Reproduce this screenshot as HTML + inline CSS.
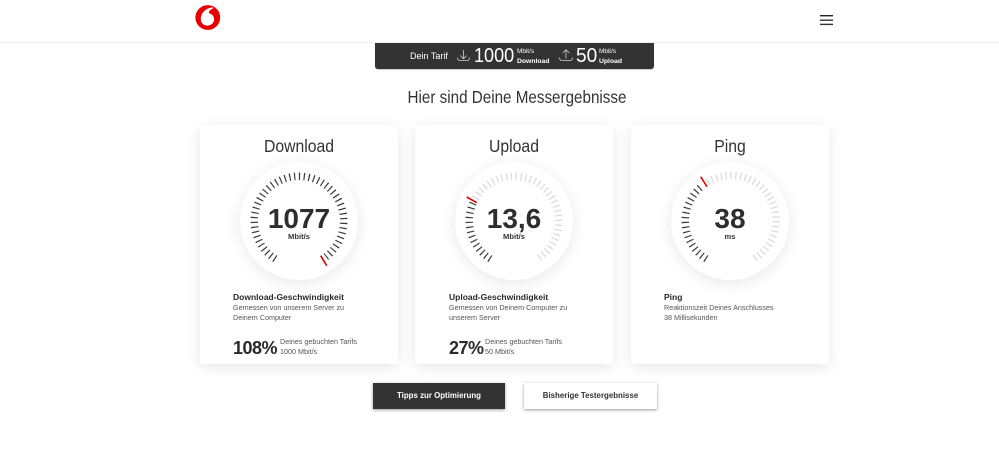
<!DOCTYPE html>
<html lang="de">
<head>
<meta charset="utf-8">
<title>Messergebnisse</title>
<style>
html,body{margin:0;padding:0;background:#fff}
body{width:999px;height:458px;position:relative;overflow:hidden;font-family:"Liberation Sans",Arial,sans-serif;color:#333}
.a{position:absolute;white-space:nowrap}
.hdr{position:absolute;left:0;top:0;width:999px;height:42px;background:#fff;border-bottom:1px solid #f1f1f1}
.bar{position:absolute;left:375px;top:43px;width:279px;height:26px;background:#333;border-radius:0 0 3px 3px;box-shadow:0 1px 1px rgba(0,0,0,.2)}
.bar .a{color:#fff}
.card{position:absolute;top:125px;width:198px;height:239px;background:#fff;border-radius:3px;box-shadow:0 3px 14px rgba(0,0,0,.1)}
.t{position:absolute;left:0;width:100%;top:10px;text-align:center;font-size:17.5px;line-height:22px;color:#333;transform:scaleX(.9)}
.dial{position:absolute;top:37px;left:40px;width:118px;height:118px;border-radius:50%;background:#fff;box-shadow:0 3px 16px rgba(0,0,0,.09)}
.num{position:absolute;left:0;width:100%;top:41px;text-align:center;font-size:28px;line-height:32px;font-weight:bold;color:#2e2e2e}
.unit{position:absolute;left:0;width:100%;top:70px;text-align:center;font-size:7.6px;line-height:9px;font-weight:bold;color:#333}
.h{position:absolute;left:33px;top:167px;font-size:8.5px;line-height:11px;font-weight:bold;color:#2a2a2a;white-space:nowrap}
.d{position:absolute;left:33px;top:178px;font-size:7.2px;line-height:9.5px;color:#555;white-space:nowrap}
.pct{position:absolute;left:33px;top:212px;font-size:18px;line-height:22px;font-weight:bold;color:#2a2a2a;letter-spacing:-.5px}
.pd{position:absolute;top:212px;font-size:7.2px;line-height:10px;color:#555;white-space:nowrap}
.btn{position:absolute;top:383px;height:26px;line-height:26px;text-align:center;font-size:7.9px;font-weight:bold;box-shadow:0 1px 3px rgba(0,0,0,.4)}
svg{position:absolute;left:0;top:0;overflow:visible}
</style>
</head>
<body>
<div class="hdr"></div>
<svg width="999" height="42" viewBox="0 0 999 42">
  <circle cx="207.800" cy="17.500" r="12.400" fill="#e60000"/>
  <path d="M212.800 7.400C206.500 7.800 200.800 12.500 200.800 19.100C200.800 23 203.800 25.600 207.400 25.600C211.200 25.600 214.100 22.900 214.100 19.300C214.100 15.900 211.800 13.900 208.900 13.300C208.800 10.700 211 9 213.500 8.300Z" fill="#fff"/>
  <rect x="820" y="15" width="13" height="1.400" fill="#222"/>
  <rect x="820" y="19.500" width="13" height="1.400" fill="#333"/>
  <rect x="820" y="23.700" width="13" height="1.400" fill="#333"/>
</svg>

<div class="bar">
  <div class="a" style="left:35px;top:7px;font-size:9px;line-height:12px">Dein Tarif</div>
  <div class="a" style="left:99px;top:0;font-size:20.500px;line-height:26px;transform:scaleX(.88);transform-origin:left">1000</div>
  <div class="a" style="left:142px;top:4.500px;font-size:6.400px;line-height:8px">Mbit/s</div>
  <div class="a" style="left:142px;top:13.500px;font-size:6.800px;line-height:9px;font-weight:bold">Download</div>
  <div class="a" style="left:201px;top:0;font-size:20.500px;line-height:26px;transform:scaleX(.93);transform-origin:left">50</div>
  <div class="a" style="left:224px;top:4.500px;font-size:6.400px;line-height:8px">Mbit/s</div>
  <div class="a" style="left:224px;top:13.500px;font-size:6.800px;line-height:9px;font-weight:bold">Upload</div>
  <svg width="279" height="26" viewBox="0 0 279 26" fill="none" stroke="#cfcfcf" stroke-width=".8">
    <path d="M88.500 7V15.500M85.300 12.500l3.200 3.300 3.200-3.300M82.500 14.500c0 1.800.800 3 2.500 3h7c1.700 0 2.500-1.200 2.500-3"/>
    <path d="M191 15.500V7M187.800 10l3.200-3.300L194.200 10M184.500 14.500c0 1.800.800 3 2.500 3h8c1.700 0 2.500-1.200 2.500-3"/>
  </svg>
</div>

<div class="a" style="left:0;width:1034px;top:87px;text-align:center;font-size:17.300px;line-height:21px;color:#333;transform:scaleX(.88)">Hier sind Deine Messergebnisse</div>

<div class="card" style="left:200px">
  <div class="t">Download</div>
  <div class="dial">
    <svg width="118" height="118" viewBox="-59 -59 118 118" fill="none">
      <path d="M-23.690 37.910A44.700 44.700 0 1 1 26.900 35.700" stroke="#3a3a3a" stroke-width="7.500" stroke-dasharray="1.200 3.600"/>
      <path d="M21.700 34.700L27.700 44.700" stroke="#e60000" stroke-width="1.600"/>
    </svg>
    <div class="num">1077</div>
    <div class="unit">Mbit/s</div>
  </div>
  <div class="h">Download-Geschwindigkeit</div>
  <div class="d">Gemessen von unserem Server zu<br>Deinem Computer</div>
  <div class="pct">108%</div>
  <div class="pd" style="left:80px">Deines gebuchten Tarifs<br>1000 Mbit/s</div>
</div>

<div class="card" style="left:415px">
  <div class="t">Upload</div>
  <div class="dial">
    <svg width="118" height="118" viewBox="-59 -59 118 118" fill="none">
      <path d="M-38.510 -22.690A44.700 44.700 0 1 1 23.690 37.910" stroke="#d9d9d9" stroke-width="7.500" stroke-dasharray="1.200 3.600"/>
      <path d="M-23.690 37.910A44.700 44.700 0 0 1 -40.840 -18.180" stroke="#3a3a3a" stroke-width="7.500" stroke-dasharray="1.200 3.600"/>
      <path d="M-37.300 -18.300L-47.300 -24" stroke="#e60000" stroke-width="1.600"/>
    </svg>
    <div class="num">13,6</div>
    <div class="unit">Mbit/s</div>
  </div>
  <div class="h" style="left:34px">Upload-Geschwindigkeit</div>
  <div class="d" style="left:34px">Gemessen von Deinem Computer zu<br>unserem Server</div>
  <div class="pct" style="left:34px">27%</div>
  <div class="pd" style="left:70px">Deines gebuchten Tarifs<br>50 Mbit/s</div>
</div>

<div class="card" style="left:631px">
  <div class="t">Ping</div>
  <div class="dial">
    <svg width="118" height="118" viewBox="-59 -59 118 118" fill="none">
      <path d="M-22.350 -38.710A44.700 44.700 0 1 1 23.690 37.910" stroke="#d9d9d9" stroke-width="7.500" stroke-dasharray="1.200 3.600"/>
      <path d="M-23.690 37.910A44.700 44.700 0 0 1 -27.520 -35.220" stroke="#3a3a3a" stroke-width="7.500" stroke-dasharray="1.200 3.600"/>
      <path d="M-23 -34.300L-29.300 -44.300" stroke="#e60000" stroke-width="1.600"/>
    </svg>
    <div class="num">38</div>
    <div class="unit">ms</div>
  </div>
  <div class="h">Ping</div>
  <div class="d">Reaktionszeit Deines Anschlusses<br>38 Millisekunden</div>
</div>

<div class="btn" style="left:373px;width:132px;background:#333;color:#fff">Tipps zur Optimierung</div>
<div class="btn" style="left:524px;width:133px;background:#fff;color:#333">Bisherige Testergebnisse</div>
</body>
</html>
